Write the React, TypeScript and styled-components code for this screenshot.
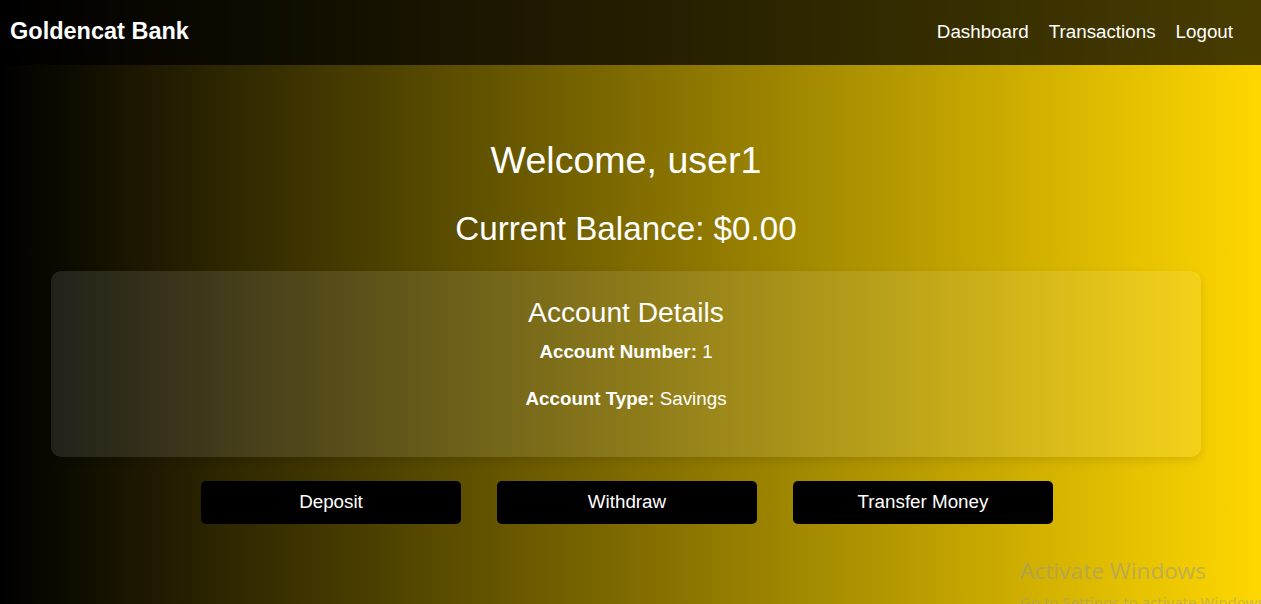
import React from "react";
import styled, { createGlobalStyle } from "styled-components";

const GlobalStyle = createGlobalStyle`
  html, body {
    margin: 0;
    padding: 0;
  }
  body {
    font-family: "Liberation Sans", Arial, sans-serif;
    color: #ffffff;
    overflow: hidden;
  }
  * { box-sizing: border-box; }
`;

const Page = styled.div`
  position: relative;
  min-height: 100vh;
  background: linear-gradient(to right, #000000, #ffd700);
  overflow: hidden;
`;

const Header = styled.header`
  height: 65px;
  display: flex;
  align-items: center;
  justify-content: space-between;
  padding: 0 28px 2px 10px;
  background: rgba(0, 0, 0, 0.72);
`;

const Logo = styled.div`
  font-size: 23.5px;
  font-weight: 700;
`;

const Nav = styled.nav`
  display: flex;
  gap: 20px;
`;

const NavLink = styled.a`
  color: #ffffff;
  text-decoration: none;
  font-size: 18.8px;
`;

const Main = styled.main`
  display: flex;
  flex-direction: column;
  align-items: center;
  padding: 74px 60px 0 51px;
  text-align: center;
`;

const Title = styled.h1`
  margin: 0;
  font-size: 37.6px;
  font-weight: 400;
  line-height: 43px;
`;

const Balance = styled.h2`
  margin: 27.5px 0 0;
  font-size: 33.2px;
  font-weight: 400;
  line-height: 38.5px;
`;

const Card = styled.section`
  width: 1150px;
  margin-top: 23px;
  display: flex;
  flex-direction: column;
  align-items: center;
  padding: 25px 20px 25.6px;
  background: rgba(255, 255, 255, 0.1);
  border-radius: 10px;
  box-shadow: 0 4px 10px rgba(0, 0, 0, 0.1);
`;

const CardTitle = styled.h2`
  margin: 0 0 10px;
  font-size: 28.2px;
  font-weight: 400;
  line-height: 32px;
`;

const Detail = styled.p`
  margin: 0 0 18.7px;
  font-size: 18.8px;
  line-height: 28px;
`;

const Label = styled.strong`
  font-weight: 700;
`;

const Actions = styled.div`
  display: flex;
  gap: 36px;
  margin-top: 24px;
  padding-left: 2px;
`;

const ActionButton = styled.button`
  width: 260px;
  height: 43px;
  display: flex;
  align-items: center;
  justify-content: center;
  background: #000000;
  color: #ffffff;
  border: none;
  border-radius: 5px;
  font-family: "Liberation Sans", Arial, sans-serif;
  font-size: 18.8px;
  cursor: pointer;
`;

const Watermark = styled.div`
  position: absolute;
  left: 1020px;
  top: 556px;
  font-family: "Noto Sans", "Open Sans", sans-serif;
  color: rgba(150, 150, 150, 0.5);
  white-space: nowrap;
  pointer-events: none;
`;

const WatermarkTitle = styled.div`
  font-size: 22.5px;
  line-height: 30px;
`;

const WatermarkSub = styled.div`
  margin-top: 6px;
  font-size: 15px;
  line-height: 20px;
`;

export default function App() {
  return (
    <>
      <GlobalStyle />
      <Page>
        <Header>
          <Logo>Goldencat Bank</Logo>
          <Nav>
            <NavLink href="#">Dashboard</NavLink>
            <NavLink href="#">Transactions</NavLink>
            <NavLink href="#">Logout</NavLink>
          </Nav>
        </Header>
        <Main>
          <Title>Welcome, user1</Title>
          <Balance>Current Balance: $0.00</Balance>
          <Card>
            <CardTitle>Account Details</CardTitle>
            <Detail>
              <Label>Account Number:</Label> 1
            </Detail>
            <Detail>
              <Label>Account Type:</Label> Savings
            </Detail>
          </Card>
          <Actions>
            <ActionButton>Deposit</ActionButton>
            <ActionButton>Withdraw</ActionButton>
            <ActionButton>Transfer Money</ActionButton>
          </Actions>
        </Main>
        <Watermark>
          <WatermarkTitle>Activate Windows</WatermarkTitle>
          <WatermarkSub>Go to Settings to activate Windows.</WatermarkSub>
        </Watermark>
      </Page>
    </>
  );
}
